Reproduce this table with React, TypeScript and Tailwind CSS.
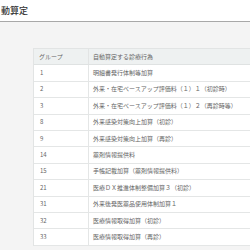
import React from "react";

const rows: [string, string][] = [
  ["1", "明細書発行体制等加算"],
  ["2", "外来・在宅ベースアップ評価料（１）１（初診時）"],
  ["3", "外来・在宅ベースアップ評価料（１）２（再診時等）"],
  ["8", "外来感染対策向上加算（初診）"],
  ["9", "外来感染対策向上加算（再診）"],
  ["14", "薬剤情報提供料"],
  ["15", "手帳記載加算（薬剤情報提供料）"],
  ["21", "医療ＤＸ推進体制整備加算３（初診）"],
  ["31", "外来後発医薬品使用体制加算１"],
  ["32", "医療情報取得加算（初診）"],
  ["33", "医療情報取得加算（再診）"],
];

const font = { fontFamily: '"Noto Sans CJK JP", "Noto Sans", sans-serif' };

export default function App() {
  return (
    <div className="w-[250px] h-[250px] overflow-hidden bg-[#f4f4f4]" style={font}>
      <div className="h-[22px] bg-white border-b border-[#a8a8a8] flex items-center">
        <span className="text-[9px] leading-none text-[#333] font-medium pl-[1px]">動算定</span>
      </div>
      <div className="pl-[33px] pt-[26px]">
        <div className="w-[240px] bg-white border-l border-t border-[#e2e4e4] text-[6px] leading-none text-[#666]">
          <div className="flex h-[16.4px] items-center bg-[#eef1f1] border-b border-[#dfe2e2]">
            <div className="w-[55px] h-full flex items-center pl-[5px] border-r border-[#e2e4e4]">グループ</div>
            <div className="flex-1 pl-[4px]">自動算定する診療行為</div>
          </div>
          {rows.map(([g, name]) => (
            <div key={g} className="flex h-[16.4px] items-center border-b border-[#e4e6e6]">
              <div className="w-[55px] h-full flex items-center pl-[6px] border-r border-[#e4e6e6]">{g}</div>
              <div className="flex-1 pl-[4px] whitespace-nowrap">{name}</div>
            </div>
          ))}
        </div>
      </div>
    </div>
  );
}
